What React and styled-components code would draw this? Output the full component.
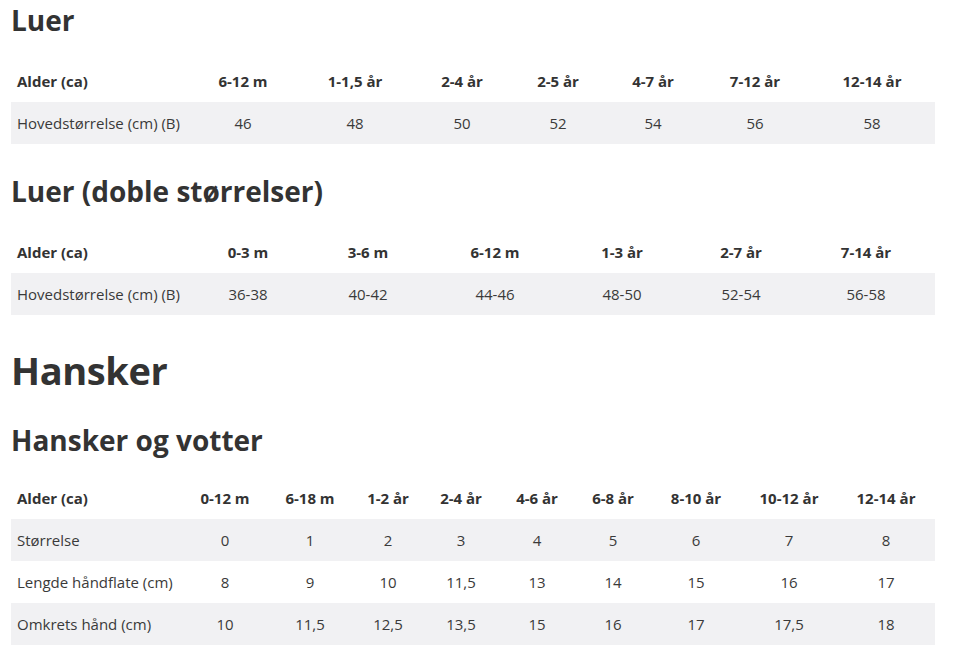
import React from "react";
import styled, { createGlobalStyle } from "styled-components";

const GlobalStyle = createGlobalStyle`
  body {
    margin: 0;
    background: #ffffff;
    font-family: "Open Sans", "Noto Sans", Arial, sans-serif;
    color: #333333;
  }
`;

const Page = styled.div`
  padding: 0 26px 0 11px;
  width: 924px;
`;

const Title = styled.h2`
  font-size: 38px;
  font-weight: 700;
  line-height: 44px;
  letter-spacing: -0.4px;
  margin: ${(props) => props.margin || "0"};
  color: #333333;
`;

const SubTitle = styled.h3`
  font-size: 28px;
  font-weight: 700;
  line-height: 34px;
  margin: ${(props) => props.margin || "0"};
  color: #333333;
`;

const Table = styled.table`
  width: 924px;
  border-collapse: collapse;
  table-layout: fixed;
  margin-top: ${(props) => props.top || 0}px;
`;

const Col = styled.col`
  width: ${(props) => props.w}px;
`;

const HeadCell = styled.th`
  height: 42px;
  padding: 0 6px;
  font-size: 15px;
  font-weight: 700;
  text-align: ${(props) => (props.first ? "left" : "center")};
  white-space: nowrap;
`;

const Row = styled.tr`
  background: ${(props) => (props.shaded ? "#f1f1f3" : "transparent")};
`;

const Cell = styled.td`
  height: 42px;
  padding: 0 6px;
  font-size: 15px;
  font-weight: 400;
  color: #3a3a3a;
  text-align: ${(props) => (props.first ? "left" : "center")};
  white-space: nowrap;
`;

const SizeTable = ({ widths, head, rows, top }) => (
  <Table top={top}>
    <colgroup>
      {widths.map((w, i) => (
        <Col key={i} w={w} />
      ))}
    </colgroup>
    <thead>
      <tr>
        {head.map((h, i) => (
          <HeadCell key={i} first={i === 0}>
            {h}
          </HeadCell>
        ))}
      </tr>
    </thead>
    <tbody>
      {rows.map((r, ri) => (
        <Row key={ri} shaded={ri % 2 === 0}>
          {r.map((c, i) => (
            <Cell key={i} first={i === 0}>
              {c}
            </Cell>
          ))}
        </Row>
      ))}
    </tbody>
  </Table>
);

const luer = {
  widths: [178, 108, 116, 98, 94, 96, 108, 126],
  head: ["Alder (ca)", "6-12 m", "1-1,5 år", "2-4 år", "2-5 år", "4-7 år", "7-12 år", "12-14 år"],
  rows: [["Hovedstørrelse (cm) (B)", "46", "48", "50", "52", "54", "56", "58"]],
};

const luerDoble = {
  widths: [180, 114, 126, 128, 126, 112, 138],
  head: ["Alder (ca)", "0-3 m", "3-6 m", "6-12 m", "1-3 år", "2-7 år", "7-14 år"],
  rows: [["Hovedstørrelse (cm) (B)", "36-38", "40-42", "44-46", "48-50", "52-54", "56-58"]],
};

const hansker = {
  widths: [172, 84, 86, 70, 76, 76, 76, 90, 96, 98],
  head: ["Alder (ca)", "0-12 m", "6-18 m", "1-2 år", "2-4 år", "4-6 år", "6-8 år", "8-10 år", "10-12 år", "12-14 år"],
  rows: [
    ["Størrelse", "0", "1", "2", "3", "4", "5", "6", "7", "8"],
    ["Lengde håndflate (cm)", "8", "9", "10", "11,5", "13", "14", "15", "16", "17"],
    ["Omkrets hånd (cm)", "10", "11,5", "12,5", "13,5", "15", "16", "17", "17,5", "18"],
  ],
};

export default function App() {
  return (
    <>
      <GlobalStyle />
      <Page>
        <SubTitle margin="3px 0 0">Luer</SubTitle>
        <SizeTable {...luer} top={23} />
        <SubTitle margin="30px 0 0">Luer (doble størrelser)</SubTitle>
        <SizeTable {...luerDoble} top={23} />
        <Title margin="33px 0 0">Hansker</Title>
        <SubTitle margin="31px 0 0">Hansker og votter</SubTitle>
        <SizeTable {...hansker} top={20} />
      </Page>
    </>
  );
}
